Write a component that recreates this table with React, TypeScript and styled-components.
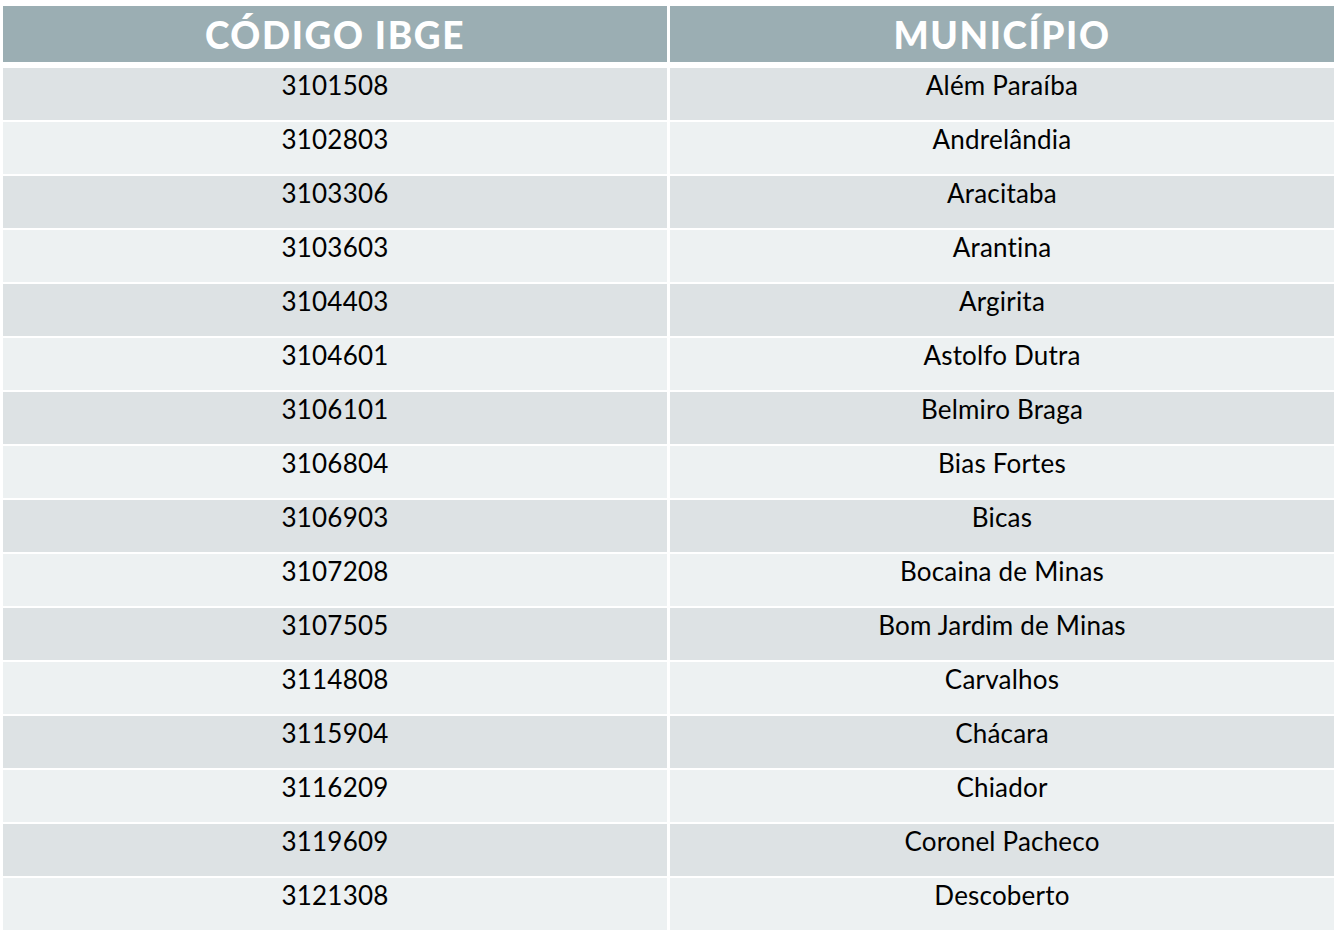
import styled, { createGlobalStyle } from "styled-components";

const GlobalStyle = createGlobalStyle`
  html, body {
    margin: 0;
    padding: 0;
    background: #ffffff;
  }
  body {
    font-family: Lato, "Open Sans", "Liberation Sans", sans-serif;
  }
`;

const Page = styled.div`
  width: 1340px;
  height: 935px;
  padding: 6px 6px 0 3px;
  box-sizing: border-box;
  background: #ffffff;
`;

const Table = styled.div`
  display: grid;
  grid-template-columns: 664px 664px;
  column-gap: 3px;
`;

const HeaderCell = styled.div`
  height: 56px;
  margin-bottom: 6px;
  background: #9baeb3;
  color: #ffffff;
  font-weight: 900;
  font-size: 37px;
  letter-spacing: 1.6px;
  display: flex;
  align-items: center;
  justify-content: center;
  padding-top: 1px;
  box-sizing: border-box;
`;

const Cell = styled.div<{ $odd: boolean }>`
  height: 52px;
  margin-bottom: 2px;
  background: ${p => (p.$odd ? "#dde2e4" : "#edf1f2")};
  color: #000000;
  font-size: 26px;
  line-height: 26px;
  letter-spacing: 0.2px;
  text-align: center;
  padding-top: 4px;
  box-sizing: border-box;
`;

const rows: [string, string][] = [
  ["3101508", "Além Paraíba"],
  ["3102803", "Andrelândia"],
  ["3103306", "Aracitaba"],
  ["3103603", "Arantina"],
  ["3104403", "Argirita"],
  ["3104601", "Astolfo Dutra"],
  ["3106101", "Belmiro Braga"],
  ["3106804", "Bias Fortes"],
  ["3106903", "Bicas"],
  ["3107208", "Bocaina de Minas"],
  ["3107505", "Bom Jardim de Minas"],
  ["3114808", "Carvalhos"],
  ["3115904", "Chácara"],
  ["3116209", "Chiador"],
  ["3119609", "Coronel Pacheco"],
  ["3121308", "Descoberto"],
];

export default function App() {
  return (
    <Page>
      <GlobalStyle />
      <Table>
        <HeaderCell>CÓDIGO IBGE</HeaderCell>
        <HeaderCell>MUNICÍPIO</HeaderCell>
        {rows.map(([code, name], i) => [
          <Cell key={code} $odd={i % 2 === 0}>{code}</Cell>,
          <Cell key={code + "-n"} $odd={i % 2 === 0}>{name}</Cell>,
        ])}
      </Table>
    </Page>
  );
}
